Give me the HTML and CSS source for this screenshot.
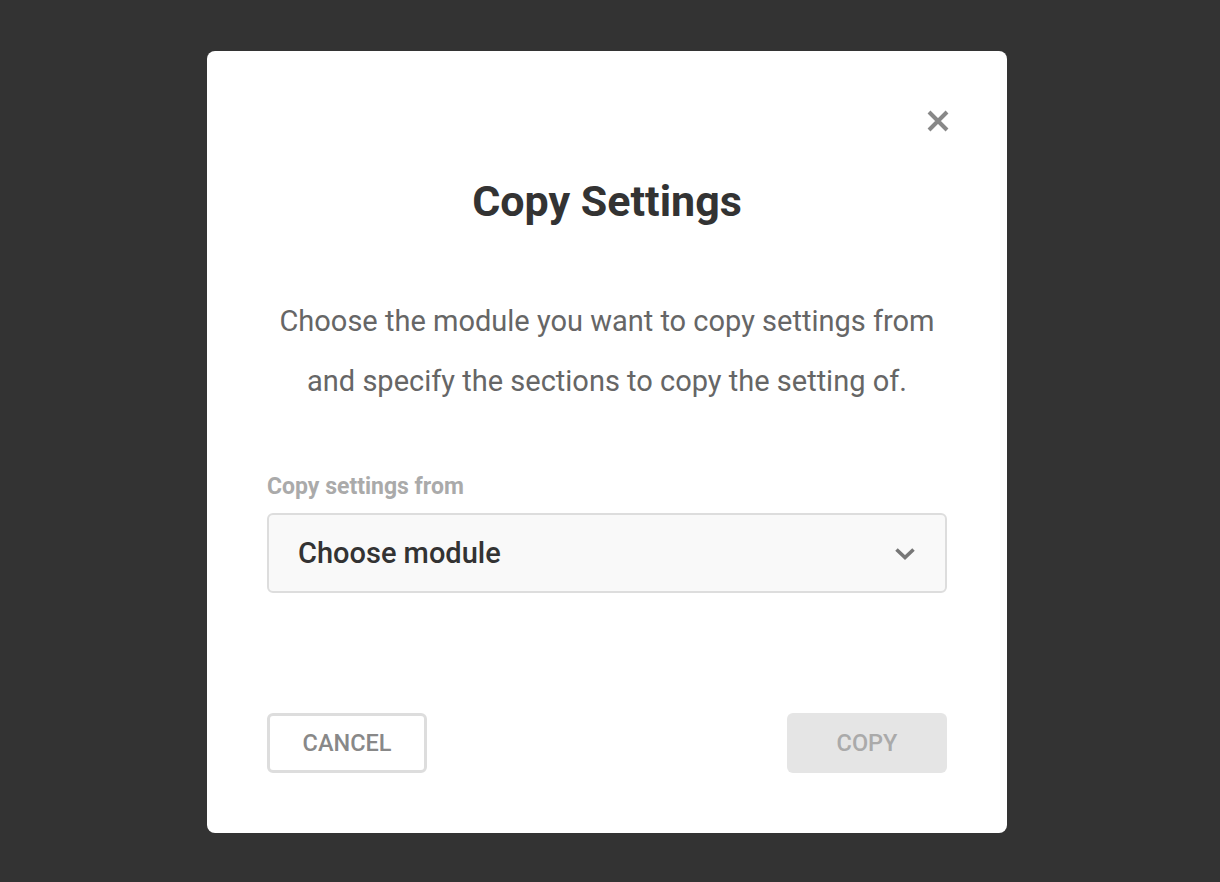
FILE: index.html
```html
<!DOCTYPE html>
<html lang="en">
<head>
<meta charset="utf-8">
<title>Copy Settings</title>
<link rel="stylesheet" href="styles.css">
</head>
<body>
<div class="modal">
  <div class="modal-header">
    <button class="close" aria-label="Close">
      <svg width="22" height="22" viewBox="0 0 22 22"><path d="M2 2 L20 20 M20 2 L2 20" stroke="#888" stroke-width="4" stroke-linecap="butt" fill="none"/></svg>
    </button>
  </div>
  <h1 class="title">Copy Settings</h1>
  <p class="desc">Choose the module you want to copy settings from<br>and specify the sections to copy the setting of.</p>
  <label class="label">Copy settings from</label>
  <div class="select">
    <span class="select-text">Choose module</span>
    <svg class="chevron" width="20" height="12" viewBox="0 0 20 12"><path d="M1.5 1.5 L10 9.5 L18.5 1.5" stroke="#777" stroke-width="3.6" fill="none"/></svg>
  </div>
  <div class="actions">
    <button class="btn btn-cancel">CANCEL</button>
    <button class="btn btn-copy">COPY</button>
  </div>
</div>
</body>
</html>
```
FILE: styles.css
```css
html, body {
  margin: 0;
  padding: 0;
}
body {
  background: #333333;
  height: 882px;
  font-family: Roboto, "Liberation Sans", sans-serif;
  overflow: hidden;
}
.modal {
  box-sizing: border-box;
  width: 800px;
  margin: 51px 0 0 207px;
  background: #ffffff;
  border-radius: 8px;
  padding: 0 60px 60px;
  display: flex;
  flex-direction: column;
}
.modal-header {
  display: flex;
  justify-content: flex-end;
  padding-top: 59px;
  margin-right: -2px;
}
.close {
  border: 0;
  background: none;
  padding: 0;
  width: 22px;
  height: 22px;
  display: block;
  cursor: pointer;
}
.close svg { display: block; }
.title {
  margin: 43px 0 0;
  font-size: 43px;
  line-height: 52px;
  font-weight: 700;
  color: #333333;
  text-align: center;
}
.desc {
  margin: 64px 0 0;
  font-size: 29px;
  line-height: 60px;
  color: #666666;
  text-align: center;
}
.label {
  margin-top: 63px;
  font-size: 23px;
  line-height: 26px;
  font-weight: 700;
  color: #aaaaaa;
}
.select {
  box-sizing: border-box;
  margin-top: 13px;
  height: 80px;
  border: 2px solid #dddddd;
  border-radius: 6px;
  background: #f9f9f9;
  display: flex;
  align-items: center;
  justify-content: space-between;
  padding: 0 30px 0 29px;
}
.select-text {
  font-size: 29px;
  font-weight: 500;
  color: #333333;
}
.chevron { display: block; margin-top: 2px; }
.actions {
  display: flex;
  justify-content: space-between;
  margin-top: 120px;
}
.btn {
  box-sizing: border-box;
  width: 160px;
  height: 60px;
  border-radius: 6px;
  font-family: Roboto, "Liberation Sans", sans-serif;
  font-size: 23.5px;
  font-weight: 500;
  padding: 0;
}
.btn-cancel {
  background: #ffffff;
  border: 3px solid #dddddd;
  color: #888888;
}
.btn-copy {
  background: #e5e5e5;
  border: 0;
  color: #aaaaaa;
}
```
